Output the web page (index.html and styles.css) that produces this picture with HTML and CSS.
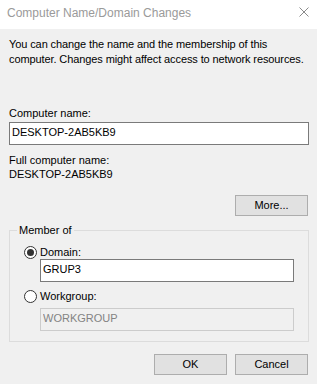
FILE: index.html
```html
<!DOCTYPE html>
<html lang="en">

<head>
    <meta charset="UTF-8">
    <meta name="viewport" content="width=device-width, initial-scale=1.0">
    <title>Computer Name/Domain Changes</title>
    <link rel="stylesheet" href="styles.css">
</head>

<body>
    <div class="window">
        <div class="titlebar">
            <span class="title">Computer Name/Domain Changes</span>
            <svg class="close" width="10" height="10" viewBox="0 0 10 10">
                <path d="M0.5 0.5 L9.5 9.5 M9.5 0.5 L0.5 9.5" stroke="#8a8a8a" stroke-width="1" fill="none"/>
            </svg>
        </div>

        <div class="content">
            <p class="intro">You can change the name and the membership of this<br>computer. Changes might affect access to network resources.</p>

            <label class="field-label" for="pcname">Computer name:</label>
            <input class="textbox" id="pcname" type="text" value="DESKTOP-2AB5KB9">

            <div class="full-name">
                <div>Full computer name:</div>
                <div>DESKTOP-2AB5KB9</div>
            </div>

            <div class="more-row">
                <button class="btn">More...</button>
            </div>

            <fieldset class="group">
                <legend>Member of</legend>
                <div class="radio-row">
                    <span class="radio checked"></span>Domain:
                </div>
                <input class="textbox group-box" type="text" value="GRUP3">
                <div class="radio-row second">
                    <span class="radio"></span>Workgroup:
                </div>
                <input class="textbox group-box workgroup-box" type="text" value="WORKGROUP" disabled>
            </fieldset>

            <div class="actions">
                <button class="btn">OK</button>
                <button class="btn">Cancel</button>
            </div>
        </div>
    </div>
</body>

</html>
```

FILE: styles.css
```css
* {
    margin: 0;
    padding: 0;
    box-sizing: border-box;
}

body {
    width: 317px;
    height: 384px;
    background-color: #f0f0f0;
    font-family: "Liberation Sans", Arial, sans-serif;
    font-size: 11px;
    line-height: 15px;
    color: #000;
    overflow: hidden;
}

.titlebar {
    height: 29px;
    background-color: #fff;
    display: flex;
    justify-content: space-between;
    align-items: flex-start;
    padding: 6px 8px 0 7px;
    font-size: 12px;
}

.title {
    color: #9a9a9a;
}

.close {
    display: block;
    margin-top: 1px;
}

.content {
    padding: 0 8px 0 9px;
}

.intro {
    margin-top: 8px;
    white-space: nowrap;
    letter-spacing: -0.1px;
}

.field-label {
    display: block;
    margin-top: 39px;
    margin-bottom: 1px;
}

.textbox {
    display: block;
    width: 100%;
    height: 23px;
    border: 1px solid #7a7a7a;
    background-color: #fff;
    padding: 1px 2px 5px;
    font-family: "Liberation Sans", Arial, sans-serif;
    font-size: 11px;
    line-height: 15px;
    color: #000;
    outline: none;
}

.full-name {
    margin-top: 8px;
    line-height: 14px;
}

.more-row {
    margin-top: 14px;
    display: flex;
    justify-content: flex-end;
    padding-right: 1px;
}

.btn {
    width: 73px;
    height: 21px;
    background-color: #e1e1e1;
    border: 1px solid #adadad;
    font-family: "Liberation Sans", Arial, sans-serif;
    font-size: 11px;
    line-height: 15px;
    color: #000;
}

.group {
    margin-top: 7px;
    border: 1px solid #dcdcdc;
    padding: 8px 0 10px;
    min-width: 0;
}

.group legend {
    margin-left: 7px;
    padding: 0 2px;
    line-height: 15px;
}

.radio-row {
    display: flex;
    align-items: center;
    height: 13px;
    padding-left: 14px;
}

.radio-row.second {
    margin-top: 8px;
}

.radio {
    width: 13px;
    height: 13px;
    border: 1px solid #333;
    border-radius: 50%;
    background-color: #fff;
    margin-right: 3px;
    display: flex;
    align-items: center;
    justify-content: center;
}

.radio.checked::after {
    content: "";
    width: 7px;
    height: 7px;
    border-radius: 50%;
    background-color: #333;
}

.group-box {
    width: calc(100% - 44px);
    margin: 0 14px 0 30px;
}

.workgroup-box {
    margin-top: 5px;
    border-color: #cccccc;
    background-color: #f0f0f0;
    color: #838383;
}

.actions {
    margin-top: 12px;
    display: flex;
    justify-content: flex-end;
    gap: 8px;
    padding-right: 1px;
}
```
